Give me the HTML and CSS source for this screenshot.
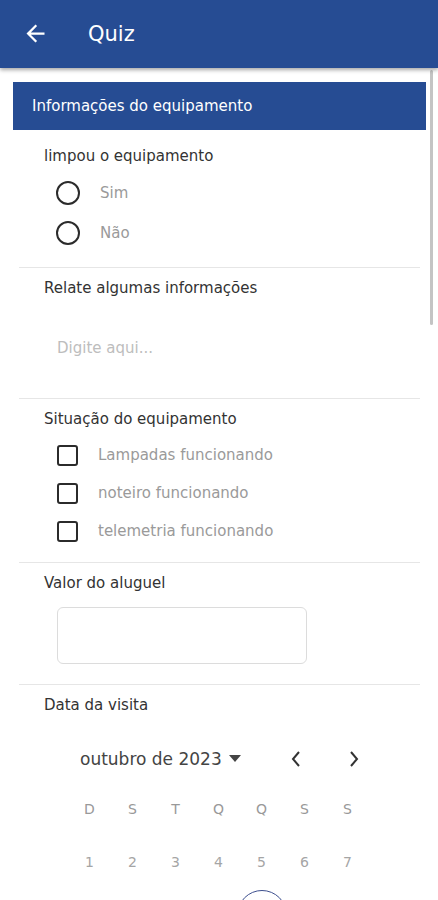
FILE: index.html
```html
<!DOCTYPE html>
<html lang="pt-BR">
<head>
    <meta charset="UTF-8">
    <meta name="viewport" content="width=device-width, initial-scale=1.0">
    <title>Quiz</title>
    <link rel="stylesheet" href="styles.css">
</head>
<body>
    <header class="appbar">
        <svg class="back" width="24" height="24" viewBox="0 0 24 24">
            <path d="M20 11H7.83l5.59-5.59L12 4l-8 8 8 8 1.41-1.41L7.83 13H20v-2z" fill="#fff"/>
        </svg>
        <span class="title">Quiz</span>
    </header>

    <main class="content">
        <div class="section-title">Informações do equipamento</div>

        <!-- pergunta 1 -->
        <div class="question first">
            <div class="q-label">limpou o equipamento</div>
            <div class="option"><span class="radio"></span><span class="opt-text">Sim</span></div>
            <div class="option"><span class="radio"></span><span class="opt-text">Não</span></div>
        </div>

        <!-- pergunta 2 -->
        <div class="question">
            <div class="q-label">Relate algumas informações</div>
            <div class="textarea">Digite aqui...</div>
        </div>

        <!-- pergunta 3 -->
        <div class="question checks">
            <div class="q-label">Situação do equipamento</div>
            <div class="option check"><span class="box"></span><span class="opt-text">Lampadas funcionando</span></div>
            <div class="option check"><span class="box"></span><span class="opt-text">noteiro funcionando</span></div>
            <div class="option check"><span class="box"></span><span class="opt-text">telemetria funcionando</span></div>
        </div>

        <!-- pergunta 4 -->
        <div class="question value">
            <div class="q-label">Valor do aluguel</div>
            <div class="input"></div>
        </div>

        <!-- pergunta 5 -->
        <div class="question date">
            <div class="q-label">Data da visita</div>
            <div class="calendar">
                <div class="cal-head">
                    <span class="month">outubro de 2023</span>
                    <span class="caret"></span>
                    <svg class="chev prev" width="12" height="18" viewBox="0 0 12 18">
                        <polyline points="9,2 3,9 9,16" fill="none" stroke="#333" stroke-width="2"/>
                    </svg>
                    <svg class="chev next" width="12" height="18" viewBox="0 0 12 18">
                        <polyline points="3,2 9,9 3,16" fill="none" stroke="#333" stroke-width="2"/>
                    </svg>
                </div>
                <div class="cal-grid">
                    <span class="wd">D</span><span class="wd">S</span><span class="wd">T</span><span class="wd">Q</span><span class="wd">Q</span><span class="wd">S</span><span class="wd">S</span>
                    <span class="day">1</span><span class="day">2</span><span class="day">3</span><span class="day">4</span><span class="day">5</span><span class="day">6</span><span class="day">7</span>
                    <span class="day"></span><span class="day"></span><span class="day"></span><span class="day"></span><span class="day today"></span>
                </div>
            </div>
        </div>
    </main>

    <div class="scrollbar"></div>
</body>
</html>
```

FILE: styles.css
```css
body {
    margin: 0;
    padding: 0;
    background-color: #fff;
    font-family: 'DejaVu Sans', 'Liberation Sans', sans-serif;
    color: #333;
    overflow: hidden;
    height: 900px;
}

.appbar {
    height: 68px;
    background-color: #264c93;
    display: flex;
    align-items: center;
    padding-left: 22px;
    box-shadow: 0 2px 4px rgba(0, 0, 0, 0.35);
    position: relative;
    z-index: 2;
}

.appbar .back {
    width: 27px;
    height: 27px;
    margin-top: -2px;
}

.appbar .title {
    color: #fff;
    font-size: 21px;
    margin-left: 39px;
    margin-top: -1px;
}

.content {
    padding: 14px 12px 0 13px;
}

.section-title {
    height: 48px;
    background-color: #264c93;
    color: #fff;
    font-size: 15px;
    display: flex;
    align-items: center;
    padding-left: 19px;
}

.question {
    margin: 0 6px;
    padding: 10px 0 0 25px;
    border-bottom: 1px solid #e6e6e6;
}

.question.first {
    padding-top: 16px;
    padding-bottom: 14px;
}

.q-label {
    font-size: 15px;
    line-height: 20px;
    color: #333;
}

.option {
    height: 40px;
    display: flex;
    align-items: center;
}

.question.first .q-label {
    margin-bottom: 7px;
}

.radio {
    width: 20px;
    height: 20px;
    border: 2px solid #2b2b2b;
    border-radius: 50%;
    margin-left: 12px;
}

.opt-text {
    font-size: 15px;
    color: #9a9a9a;
    margin-left: 20px;
}

.textarea {
    font-size: 15px;
    line-height: 20px;
    color: #bdbdbd;
    padding: 40px 0 40px 13px;
}

.question.checks {
    padding-bottom: 12px;
}

.question.checks .q-label {
    margin-bottom: 7px;
}

.option.check {
    height: 38px;
}

.box {
    width: 17px;
    height: 17px;
    border: 2px solid #2b2b2b;
    border-radius: 3px;
    margin-left: 13px;
}

.option.check .opt-text {
    margin-left: 20px;
}

.question.value {
    padding-bottom: 20px;
}

.input {
    width: 248px;
    height: 55px;
    border: 1px solid #dcdcdc;
    border-radius: 6px;
    margin: 14px 0 0 13px;
}

.question.date {
    border-bottom: none;
}

.calendar {
    margin: 24px 0 0 24px;
    width: 301px;
}

.cal-head {
    height: 40px;
    display: flex;
    align-items: center;
    padding-left: 12px;
}

.month {
    font-size: 17px;
    color: #444;
}

.caret {
    width: 0;
    height: 0;
    border-left: 6px solid transparent;
    border-right: 6px solid transparent;
    border-top: 7px solid #444;
    margin-left: 7px;
    margin-top: -2px;
}

.chev.prev {
    margin-left: 49px;
}

.chev.next {
    margin-left: 46px;
}

.cal-grid {
    margin-top: 3px;
    display: grid;
    grid-template-columns: repeat(7, 43px);
    grid-auto-rows: 53px;
}

.wd, .day {
    display: flex;
    align-items: center;
    justify-content: center;
    font-size: 14px;
    color: #999;
}

.day {
    color: #a5a5a5;
}

.day.today {
    border: 1.5px solid #3d4f8e;
    border-radius: 50%;
    width: 50px;
    height: 50px;
    justify-self: center;
    align-self: center;
    box-sizing: border-box;
}

.scrollbar {
    position: absolute;
    top: 70px;
    left: 430px;
    width: 3px;
    height: 255px;
    background-color: #c4c4c4;
    border-radius: 2px;
}
```
